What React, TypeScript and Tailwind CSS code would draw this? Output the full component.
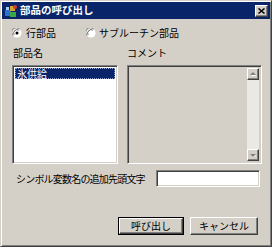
import React from 'react';

const font = { fontFamily: '"Noto Sans CJK JP", "Noto Sans", sans-serif' };

function Radio({ checked }: { checked?: boolean }) {
  return (
    <svg width="10" height="10" viewBox="0 0 12 12">
      <circle cx="6" cy="6" r="5.5" fill="#ffffff" />
      <path d="M1.2 9 A5.5 5.5 0 0 1 9 1.2" stroke="#808080" strokeWidth="1.2" fill="none" />
      <path d="M2.5 8.2 A4.2 4.2 0 0 1 8.2 2.5" stroke="#404040" strokeWidth="1" fill="none" />
      {checked && <circle cx="6" cy="6" r="1.8" fill="#000000" />}
    </svg>
  );
}

function AppIcon() {
  return (
    <svg width="14" height="14" viewBox="0 0 14 14">
      <rect x="1" y="6" width="6" height="6" fill="#2f6fd0" />
      <rect x="6" y="8" width="6" height="5" fill="#3aa845" />
      <rect x="6" y="2" width="5" height="5" fill="#d9a520" />
      <circle cx="11" cy="3" r="2" fill="#d23b2b" />
      <rect x="2" y="3" width="3" height="3" fill="#9fd0ff" />
    </svg>
  );
}

function ScrollButton({ up }: { up?: boolean }) {
  return (
    <div className="w-[12px] h-[12px] bg-[#d4d0c8] border border-t-white border-l-white border-r-[#404040] border-b-[#404040] shadow-[inset_-1px_-1px_0_#808080] flex items-center justify-center">
      <svg width="6" height="4" viewBox="0 0 6 4">
        {up ? (
          <>
            <path d="M1 4 L3.5 1.5 L6 4 Z" fill="#ffffff" />
            <path d="M0 3 L3 0 L6 3 Z" fill="#808080" />
          </>
        ) : (
          <>
            <path d="M1 2 L3.5 4.5 L6 2 Z" fill="#ffffff" />
            <path d="M0 1 L3 4 L6 1 Z" fill="#808080" />
          </>
        )}
      </svg>
    </div>
  );
}

const sunken =
  'border border-t-[#808080] border-l-[#808080] border-r-white border-b-white shadow-[inset_1px_1px_0_#404040,inset_-1px_-1px_0_#d4d0c8]';

export default function App() {
  return (
    <div
      className="w-[272px] h-[247px] bg-[#d4d0c8] border border-t-[#d4d0c8] border-l-[#d4d0c8] border-r-[#404040] border-b-[#404040] shadow-[inset_1px_1px_0_#ffffff,inset_-1px_-1px_0_#808080] text-[10px] text-black flex flex-col overflow-hidden"
      style={font}
    >
      {/* title bar */}
      <div className="h-[17px] mx-[1px] mt-[1px] bg-[#0a246a] flex items-center pl-[2px] pr-[2px]">
        <AppIcon />
        <span className="ml-[2px] text-white font-bold text-[10.5px] leading-none">部品の呼び出し</span>
        <div className="ml-auto w-[13px] h-[12px] bg-[#d4d0c8] border border-t-white border-l-white border-r-[#404040] border-b-[#404040] shadow-[inset_-1px_-1px_0_#808080] flex items-center justify-center">
          <svg width="7" height="6" viewBox="0 0 7 6">
            <path d="M0.5 0.5 L6.5 5.5 M6.5 0.5 L0.5 5.5" stroke="#000" strokeWidth="1.5" />
          </svg>
        </div>
      </div>

      {/* radio row */}
      <div className="h-[12px] mt-[8px] pl-[11px] flex items-center leading-none">
        <div className="flex items-center gap-[4px] w-[74px]">
          <Radio checked />
          <span>行部品</span>
        </div>
        <div className="flex items-center gap-[3px]">
          <Radio />
          <span>サブルーチン部品</span>
        </div>
      </div>

      {/* labels */}
      <div className="h-[12px] mt-[8px] pl-[12px] flex items-center leading-none">
        <span className="w-[114px]">部品名</span>
        <span>コメント</span>
      </div>

      {/* boxes */}
      <div className="mt-[6px] pl-[11px] flex gap-[9px]">
        <div className={`w-[106px] h-[99px] bg-white ${sunken} p-[2px]`}>
          <div className="h-[11px] bg-[#0a246a] text-white leading-none flex items-center pl-[1px] border border-dotted border-[#8fa0d0]">
            氷供給
          </div>
        </div>
        <div className={`w-[135px] h-[99px] bg-[#d4d0c8] ${sunken} p-[2px] flex justify-end`}>
          <div className="w-[12px] h-full flex flex-col bg-[#ebe9e5]">
            <ScrollButton up />
            <div className="flex-1" />
            <ScrollButton />
          </div>
        </div>
      </div>

      {/* prefix */}
      <div className="mt-[6px] pl-[15px] flex items-center">
        <span className="w-[140px] leading-none tracking-[-0.8px]">シンボル変数名の追加先頭文字</span>
        <div className={`w-[104px] h-[17px] bg-white ${sunken}`} />
      </div>

      {/* buttons */}
      <div className="mt-[30px] pl-[117px] flex gap-[6px] leading-none">
        <div className="w-[66px] h-[18px] border border-black">
          <div className="w-full h-full border border-t-white border-l-white border-r-[#404040] border-b-[#404040] shadow-[inset_-1px_-1px_0_#808080] flex items-center justify-center">
            呼び出し
          </div>
        </div>
        <div className="w-[68px] h-[18px] border border-t-white border-l-white border-r-[#404040] border-b-[#404040] shadow-[inset_-1px_-1px_0_#808080] flex items-center justify-center">
          キャンセル
        </div>
      </div>
    </div>
  );
}
